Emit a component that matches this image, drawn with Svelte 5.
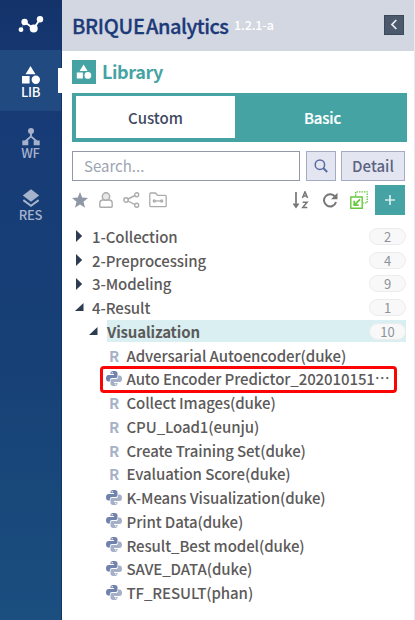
<script>
  const folders = [
    { name: '1-Collection', count: 2 },
    { name: '2-Preprocessing', count: 4 },
    { name: '3-Modeling', count: 9 },
    { name: '4-Result', count: 1, open: true },
  ];
  const items = [
    { kind: 'R', name: 'Adversarial Autoencoder(duke)' },
    { kind: 'py', name: 'Auto Encoder Predictor_202010151', marked: true },
    { kind: 'R', name: 'Collect Images(duke)' },
    { kind: 'R', name: 'CPU_Load1(eunju)' },
    { kind: 'R', name: 'Create Training Set(duke)' },
    { kind: 'R', name: 'Evaluation Score(duke)' },
    { kind: 'py', name: 'K-Means Visualization(duke)' },
    { kind: 'py', name: 'Print Data(duke)' },
    { kind: 'py', name: 'Result_Best model(duke)' },
    { kind: 'py', name: 'SAVE_DATA(duke)' },
    { kind: 'py', name: 'TF_RESULT(phan)' },
  ];
</script>

{#snippet shapes()}
  <path d="M9.5 0 14.5 8.2h-10zM1 10h7.6v7.6H1z" />
  <circle cx="14.8" cy="13.8" r="4.2" />
{/snippet}

<div class="app">
  <nav>
    <div class="logo">
      <svg width="26" height="20" viewBox="0 0 26 20" fill="#fff">
        <path d="M6.6 7 15.7 13.6 22 4.2" fill="none" stroke="#fff" stroke-width="1.8" />
        <path d="M3 14.7 6.6 7" stroke="#fff" stroke-width=".6" opacity=".5" />
        <circle cx="3" cy="14.7" r="2.4" /><circle cx="6.6" cy="7" r="3.2" />
        <circle cx="15.7" cy="13.6" r="4" /><circle cx="22" cy="4.2" r="3.2" />
      </svg>
    </div>
    <div class="tab active">
      <svg width="20" height="19" viewBox="0 0 20 19" fill="#fff">{@render shapes()}</svg>
      <span>LIB</span>
      <i class="notch"></i>
    </div>
    <div class="tab">
      <svg width="20" height="19" viewBox="0 0 20 19" fill="#a5b2cc">
        <circle cx="10" cy="4" r="3" /><path d="M1.3 13.5h6v4.8h-6zM12.7 13.5h6v4.8h-6z" />
        <path d="M10 5v5M4.2 14.5 10 9.4l5.8 5.1" fill="none" stroke="#a5b2cc" stroke-width="1.9" />
      </svg>
      <span>WF</span>
    </div>
    <div class="tab">
      <svg width="20" height="19" viewBox="0 0 20 19" fill="#a5b2cc">
        <path d="m10 .3 8.2 6.2-8.2 6.3-8.2-6.3z" />
        <path d="m2.3 11.1 7.7 5.7 7.7-5.7" fill="none" stroke="#a5b2cc" stroke-width="2" />
      </svg>
      <span>RES</span>
    </div>
  </nav>

  <main>
    <header>
      <h1><span class="brique">BRIQUE</span><span class="analytics">Analytics</span></h1>
      <span class="version">1.2.1-a</span>
      <button class="collapse" aria-label="Collapse">
        <svg width="8" height="11" viewBox="0 0 8 11"><path d="M6.3 1 2 5.5 6.3 10" fill="none" stroke="#e8eaf0" stroke-width="1.8" /></svg>
      </button>
    </header>

    <div class="heading">
      <span class="badge"><svg width="16" height="16" viewBox="0 0 20 19" fill="#fff">{@render shapes()}</svg></span>
      <h2>Library</h2>
    </div>

    <div class="switch">
      <div class="custom">Custom</div>
      <div class="basic">Basic</div>
    </div>

    <div class="search">
      <div class="field">Search...</div>
      <button class="find" aria-label="Search">
        <svg width="14" height="14" viewBox="0 0 14 14" fill="none" stroke="#596ba3"><circle cx="5.9" cy="5.7" r="4.7" stroke-width="1.5" /><path d="m9.2 9 4 4" stroke-width="1.9" /></svg>
      </button>
      <button class="detail">Detail</button>
    </div>

    <div class="tools">
      <svg class="star" width="16" height="16" viewBox="0 0 16 16" fill="#9098a8"><path d="m8 0 2.2 5.5 5.8.4-4.5 3.8 1.5 6L8 12.4l-5 3.3 1.5-6L0 5.9l5.800-.4z" /></svg>
      <svg class="user" width="14" height="16" viewBox="0 0 14 16" fill="#e7e7e7" stroke="#ababab" stroke-width="1.4"><path d="M4 8h6c2 0 3.2 1.3 3.2 3.2v3c0 .7-.3 1-1 1H1.8c-.7 0-1-.3-1-1v-3C.8 9.3 2 8 4 8z" fill="#fff" /><circle cx="7" cy="4.5" r="3.7" /></svg>
      <svg class="share" width="17" height="16" viewBox="0 0 17 16" fill="#fff" stroke="#ababab" stroke-width="1.4"><path d="m3 8 10-5M3 8l10 5.2" /><circle cx="3" cy="8" r="2.2" /><circle cx="13.7" cy="2.8" r="2" /><circle cx="13.7" cy="13.2" r="2" /></svg>
      <svg class="folder" width="18" height="16" viewBox="0 0 18 16" fill="none" stroke="#ababab" stroke-width="1.3"><path d="M.8 13.5V2c0-.7.3-1 1-1h4.7l2 2.3h7.7c.7 0 1 .3 1 1v9.2c0 .8-.3 1.2-1 1.2H1.8c-.7 0-1-.4-1-1.2z" /><path d="M6 9h6" /><circle cx="5.3" cy="9" r="1" /><circle cx="12.7" cy="9" r="1" /></svg>
      <span class="gap"></span>
      <svg class="sort" width="17" height="18" viewBox="0 0 17 18" fill="none" stroke="#777"><path d="M3 1v14M.5 12.5 3 16l2.500-3.500" stroke-width="1.7" /><path d="M9.4 7 12 .8 14.6 7M10.3 5h3.4M9.7 11.3h4.4l-4.4 5.3h4.6" stroke-width="1.5" /></svg>
      <svg class="reload" width="16" height="16" viewBox="0 0 16 16" fill="none"><path d="M13.3 5.1A6.1 6.1 0 1 0 14 10" stroke="#777" stroke-width="2" /><path d="M15.5.7v6.5H9z" fill="#777" /></svg>
      <svg class="import" width="18" height="18" viewBox="0 0 18 18" fill="none" stroke="#66c83d"><path d="M5.7 5V.8h11.5v11h-4" stroke-width="1.3" stroke-dasharray="1.5 1" /><path d="M.8 6h11.4v11.2H.8z" stroke-width="1.4" /><path d="M10 8.3 4.5 13.8M4.2 9.7v4.5h4.5" stroke-width="1.7" /></svg>
      <button class="add" aria-label="Add"><svg width="10" height="10" viewBox="0 0 10 10"><path d="M5 0v10M0 5h10" stroke="#d5eeee" stroke-width="1.7" /></svg></button>
    </div>

    <div class="tree">
      {#each folders as f}
        <div class="row">
          <span class="arrow">
            {#if f.open}
              <svg width="9" height="9" viewBox="0 0 9 9"><path d="M8.5 0v8H0z" fill="#2e3c52" /></svg>
            {:else}
              <svg width="9" height="12" viewBox="0 0 9 12"><path d="M1 0v12l6.2-6z" fill="#2e3c52" /></svg>
            {/if}
          </span>
          <span class="label">{f.name}</span>
          <span class="count">{f.count}</span>
        </div>
      {/each}
      <div class="row sub">
        <span class="arrow"><svg width="9" height="9" viewBox="0 0 9 9"><path d="M8.5 0v8H0z" fill="#2e3c52" /></svg></span>
        <div class="selected"><span class="label">Visualization</span><span class="count">10</span></div>
      </div>
      {#each items as item}
        <div class="row leaf" class:marked={item.marked}>
          <span class="kind">
            {#if item.kind === 'R'}
              <b>R</b>
            {:else}
              <svg width="16" height="15" viewBox="0 0 16 15">
                <path d="M4.5 3V2C4.5.6 5.7 0 7.8 0s3.7.6 3.7 2v3.3c0 1-.7 1.7-1.7 1.7H6C4.7 7 3.9 7.8 3.9 9v1.5H2.5C.8 10.5 0 9.2 0 7.2s.8-3.3 2.5-3.3H8V3z" fill="#7082ad" />
                <path d="M11.5 12v1c0 1.4-1.2 2-3.3 2s-3.7-.6-3.7-2V9.7C4.5 8.7 5.2 8 6.2 8H10c1.3 0 2.1-.8 2.1-2V4.5h1.4c1.7 0 2.5 1.3 2.5 3.3s-.8 3.3-2.5 3.3H8v.9z" fill="#a4b0c8" />
                <circle cx="6.2" cy="1.8" r=".7" fill="#fff" /><circle cx="9.8" cy="13.2" r=".7" fill="#fff" />
              </svg>
            {/if}
          </span>
          <span class="label">{item.name}{#if item.marked}<span class="more">…</span>{/if}</span>
        </div>
      {/each}
    </div>
  </main>
</div>

<style>
  :global(body) { margin: 0; background: #fff; }
  .app, .app * { box-sizing: border-box; }
  .app {
    display: flex; width: 415px; height: 620px; overflow: hidden;
    font-family: "Noto Sans CJK KR", "Noto Sans", sans-serif;
    font-size: 16px; color: #5c5a5a; white-space: nowrap;
  }
  button { padding: 0; margin: 0; font: inherit; display: flex; align-items: center; justify-content: center; }
  svg { display: block; flex: none; }
  nav { width: 62px; flex: none; background: linear-gradient(#14336b, #173b76 20%, #174176 60%, #1b4f80); border-right: 1px solid #123469; }
  .logo { height: 50px; padding: 15px 0 0 18px; }
  .tab { position: relative; height: 62px; display: flex; flex-direction: column; align-items: center; padding-top: 16px; color: #a5b2cc; }
  .tab.active { height: 61px; padding-top: 15.5px; background: #214a80; color: #fff; }
  .tab span { font-size: 13px; line-height: 14px; font-weight: 500; letter-spacing: -.3px; }
  .notch { position: absolute; right: -1px; top: 18px; width: 4px; height: 25px; background: #fff; }
  main { width: 353px; border-right: 1px solid #e9eaed; }
  header { height: 51px; background: #d3d7e2; display: flex; align-items: center; padding: 0 10px; }
  h1 { margin: 0; display: flex; gap: 3px; font-size: 20px; line-height: 30px; font-weight: 500; color: #1c3a78; -webkit-text-stroke: .3px #1c3a78; }
  .brique { width: 71px; letter-spacing: -.3px; }
  .analytics { width: 83px; letter-spacing: -.5px; }
  .version { font-size: 12.5px; font-weight: 500; color: #fff; margin: -3px 0 0 5px; letter-spacing: -.1px; }
  .collapse { width: 20px; height: 20px; margin: -2px 0 0 auto; background: #4c586b; border: 1px solid #3c495d; }
  .heading { display: flex; align-items: center; height: 42px; padding: 0 0 0 10px; }
  .badge { width: 24px; height: 24px; background: #45a3a3; display: flex; align-items: center; justify-content: center; }
  h2 { margin: -2px 0 0 6px; font-size: 18px; line-height: 24px; font-weight: 700; color: #45a3a3; letter-spacing: -.4px; }
  .switch { height: 49px; width: 335px; margin-left: 10px; background: #45a3a3; padding: 3px 4px 4px; display: flex; font-size: 15px; font-weight: 500; line-height: 43px; text-align: center; }
  .custom { width: 159px; background: #fff; color: #3e4860; }
  .basic { flex: 1; color: #fff; padding-left: 7px; -webkit-text-stroke: .2px #fff; letter-spacing: -.2px; }
  .search { display: flex; height: 30px; margin: 9px 0 0 10px; }
  .field { width: 228px; border: 1px solid #9298a8; padding-left: 11px; line-height: 28px; font-size: 15px; color: #9da4b3; }
  .find { width: 30px; margin-left: 6px; background: #e3e6f1; border: 1px solid #a3abc5; }
  .detail { width: 64px; margin-left: 5px; background: #e3e6f1; border: 1px solid #a3abc5; color: #5b6380; font-size: 15px; font-weight: 500; line-height: 28px; align-items: flex-start; }
  .tools { display: flex; align-items: center; height: 30px; margin: 4px 8px 0 10px; width: 333px; }
  .user { margin-left: 11px; } .share { margin-left: 10px; } .folder { margin-left: 9px; }
  .gap { flex: 1; }
  .reload { margin-left: 12px; } .import { margin-left: 12px; }
  .add { width: 30px; height: 30px; margin-left: 7px; border: 0; background: #45a3a3; }
  .tree { margin-top: 9.4px; }
  .row { display: flex; align-items: center; height: 23.75px; line-height: 23px; padding: 0 8px 0 13px; }
  .arrow { width: 9px; margin-right: 8px; flex: none; }
  .label { font-size: 15px; font-weight: 500; letter-spacing: -.09px; }
  .count { width: 37px; height: 17px; margin-left: auto; border: 1px solid #ececec; border-radius: 9px; background: #f8f8f8; font-size: 13px; line-height: 15px; text-align: center; color: #8c939e; font-weight: 400; }
  .sub { padding-left: 27px; }
  .sub .arrow { margin-right: 9px; }
  .selected { flex: 1; height: 22px; display: flex; align-items: center; background: #d9eff1; }
  .selected .label { font-weight: 700; letter-spacing: -.15px; }
  .leaf { position: relative; padding-left: 44px; }
  .kind { width: 16px; margin-right: 4.5px; text-align: center; color: #a7b1c7; font-size: 15px; flex: none; }
  .kind svg { margin-top: -1px; }
  .more { display: inline-block; line-height: 1; transform: translate(0, -1px); }
  .marked::after { content: ""; box-sizing: border-box; position: absolute; left: 38px; top: -1px; width: 297px; height: 27px; border: 3px solid #fc0404; border-radius: 4px; }
</style>
